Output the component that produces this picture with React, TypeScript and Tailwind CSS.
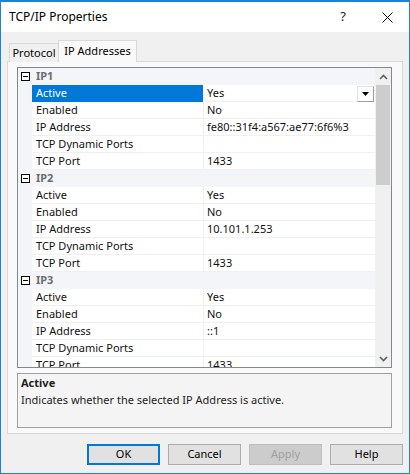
import { Fragment } from 'react'

const font = { fontFamily: '"Noto Sans", "DejaVu Sans", sans-serif' }

type Prop = { name: string; value: string }

const groups: { title: string; props: Prop[] }[] = [
  {
    title: 'IP1',
    props: [
      { name: 'Active', value: 'Yes' },
      { name: 'Enabled', value: 'No' },
      { name: 'IP Address', value: 'fe80::31f4:a567:ae77:6f6%3' },
      { name: 'TCP Dynamic Ports', value: '' },
      { name: 'TCP Port', value: '1433' },
    ],
  },
  {
    title: 'IP2',
    props: [
      { name: 'Active', value: 'Yes' },
      { name: 'Enabled', value: 'No' },
      { name: 'IP Address', value: '10.101.1.253' },
      { name: 'TCP Dynamic Ports', value: '' },
      { name: 'TCP Port', value: '1433' },
    ],
  },
  {
    title: 'IP3',
    props: [
      { name: 'Active', value: 'Yes' },
      { name: 'Enabled', value: 'No' },
      { name: 'IP Address', value: '::1' },
      { name: 'TCP Dynamic Ports', value: '' },
      { name: 'TCP Port', value: '1433' },
    ],
  },
]

function MinusBox() {
  return (
    <div className="w-[9px] h-[9px] border border-black bg-white flex items-center justify-center">
      <div className="w-[5px] h-px bg-black" />
    </div>
  )
}

function CategoryRow({ title }: { title: string }) {
  return (
    <div className="flex h-[17px] bg-[#f4f5f9] items-center shrink-0">
      <div className="w-[14px] pl-[3px] flex items-center">
        <MinusBox />
      </div>
      <span className="pl-[4px] text-[11px] font-bold text-[#6d6d6d]">{title}</span>
    </div>
  )
}

function PropRow({ prop, selected }: { prop: Prop; selected?: boolean }) {
  return (
    <div className="flex h-[17px] shrink-0">
      <div className="w-[14px] bg-[#f4f5f9]" />
      <div
        className={`w-[171px] pl-[4px] flex items-center text-[11px] border-b ${
          selected ? 'bg-[#0078d7] text-white border-[#0078d7]' : 'bg-white text-[#111] border-[#f0f0f0]'
        }`}
      >
        {prop.name}
      </div>
      <div className="w-px bg-[#f0f0f0]" />
      <div className="w-[171px] pl-[3px] flex items-center text-[11px] text-[#111] bg-white border-b border-[#f0f0f0] relative">
        {prop.value}
        {selected && (
          <div className="absolute right-[1px] top-[1px] w-[17px] h-[16px] bg-[#fdfdfd] border-r border-b border-[#a0a0a0] border-t border-l border-t-[#e3e3e3] border-l-[#e3e3e3] flex items-center justify-center">
            <svg width="7" height="4" viewBox="0 0 7 4">
              <path d="M0 0h7L3.5 4z" fill="#000" />
            </svg>
          </div>
        )}
      </div>
    </div>
  )
}

function Chevron({ up }: { up?: boolean }) {
  return (
    <svg width="9" height="6" viewBox="0 0 9 6">
      <path
        d={up ? 'M1 5L4.5 1.5L8 5' : 'M1 1L4.5 4.5L8 1'}
        stroke="#606060"
        strokeWidth="1.6"
        fill="none"
      />
    </svg>
  )
}

function PropertyGrid() {
  return (
    <div className="h-[301px] border border-[#828790] flex bg-white overflow-hidden">
      <div className="w-[357px] flex flex-col overflow-hidden">
        {groups.map((g) => (
          <Fragment key={g.title}>
            <CategoryRow title={g.title} />
            {g.props.map((p, i) => (
              <PropRow key={p.name} prop={p} selected={g.title === 'IP1' && i === 0} />
            ))}
          </Fragment>
        ))}
      </div>
      <div className="w-[16px] bg-[#f0f0f0] flex flex-col">
        <div className="h-[17px] flex items-center justify-center">
          <Chevron up />
        </div>
        <div className="h-[100px] mx-px bg-[#cdcdcd]" />
        <div className="flex-1" />
        <div className="h-[17px] flex items-center justify-center">
          <Chevron />
        </div>
      </div>
    </div>
  )
}

function Button({ label, primary, disabled }: { label: string; primary?: boolean; disabled?: boolean }) {
  return (
    <div
      className={`w-[73px] h-[21px] flex items-center justify-center text-[11px] ${
        primary
          ? 'border-2 border-[#0078d7] bg-[#e1e1e1] text-black'
          : disabled
            ? 'border border-[#bfbfbf] bg-[#cccccc] text-[#a0a0a0]'
            : 'border border-[#adadad] bg-[#e1e1e1] text-black'
      }`}
    >
      {label}
    </div>
  )
}

export default function App() {
  return (
    <div
      className="w-[410px] h-[474px] border border-[#1883d7] border-t-2 bg-[#f0f0f0] flex flex-col overflow-hidden"
      style={font}
    >
      {/* title bar */}
      <div className="h-[30px] bg-white flex items-center shrink-0">
        <span className="pl-[8px] text-[12px] text-black">TCP/IP Properties</span>
        <div className="flex-1" />
        <span className="text-[13px] text-[#222] mr-[36px]">?</span>
        <svg width="11" height="11" viewBox="0 0 11 11" className="mr-[16px]">
          <path d="M0.5 0.5L10.5 10.5M10.5 0.5L0.5 10.5" stroke="#000" strokeWidth="1" />
        </svg>
      </div>

      <div className="px-[6px] pt-[7px] flex flex-col">
        {/* tabs */}
        <div className="flex items-end h-[22px] pl-[2px] relative z-10">
          <div className="h-[19px] w-[50px] border border-b-0 border-[#d9d9d9] bg-[#f0f0f0] text-[11px] text-black flex items-center justify-center -mb-px">
            Protocol
          </div>
          <div className="h-[22px] w-[79px] border border-b-0 border-[#d9d9d9] bg-[#f9f9f9] text-[11px] text-black flex items-center justify-center -mb-px -ml-px">
            IP Addresses
          </div>
        </div>

        {/* tab panel */}
        <div className="h-[373px] border border-[#d9d9d9] bg-[#f9f9f9] pl-[9px] pr-[10px] pt-[5px] flex flex-col">
          <PropertyGrid />
          <div className="mt-[5px] h-[55px] border border-[#a0a0a0] bg-[#f4f4f4] px-[3px] pt-px text-[11px] text-[#1e1e1e]">
            <div className="font-bold h-[17px] flex items-center">Active</div>
            <div className="h-[17px] flex items-center">Indicates whether the selected IP Address is active.</div>
          </div>
        </div>

        {/* buttons */}
        <div className="flex justify-end gap-[8px] mt-[10px]">
          <Button label="OK" primary />
          <Button label="Cancel" />
          <Button label="Apply" disabled />
          <Button label="Help" />
        </div>
      </div>
    </div>
  )
}
